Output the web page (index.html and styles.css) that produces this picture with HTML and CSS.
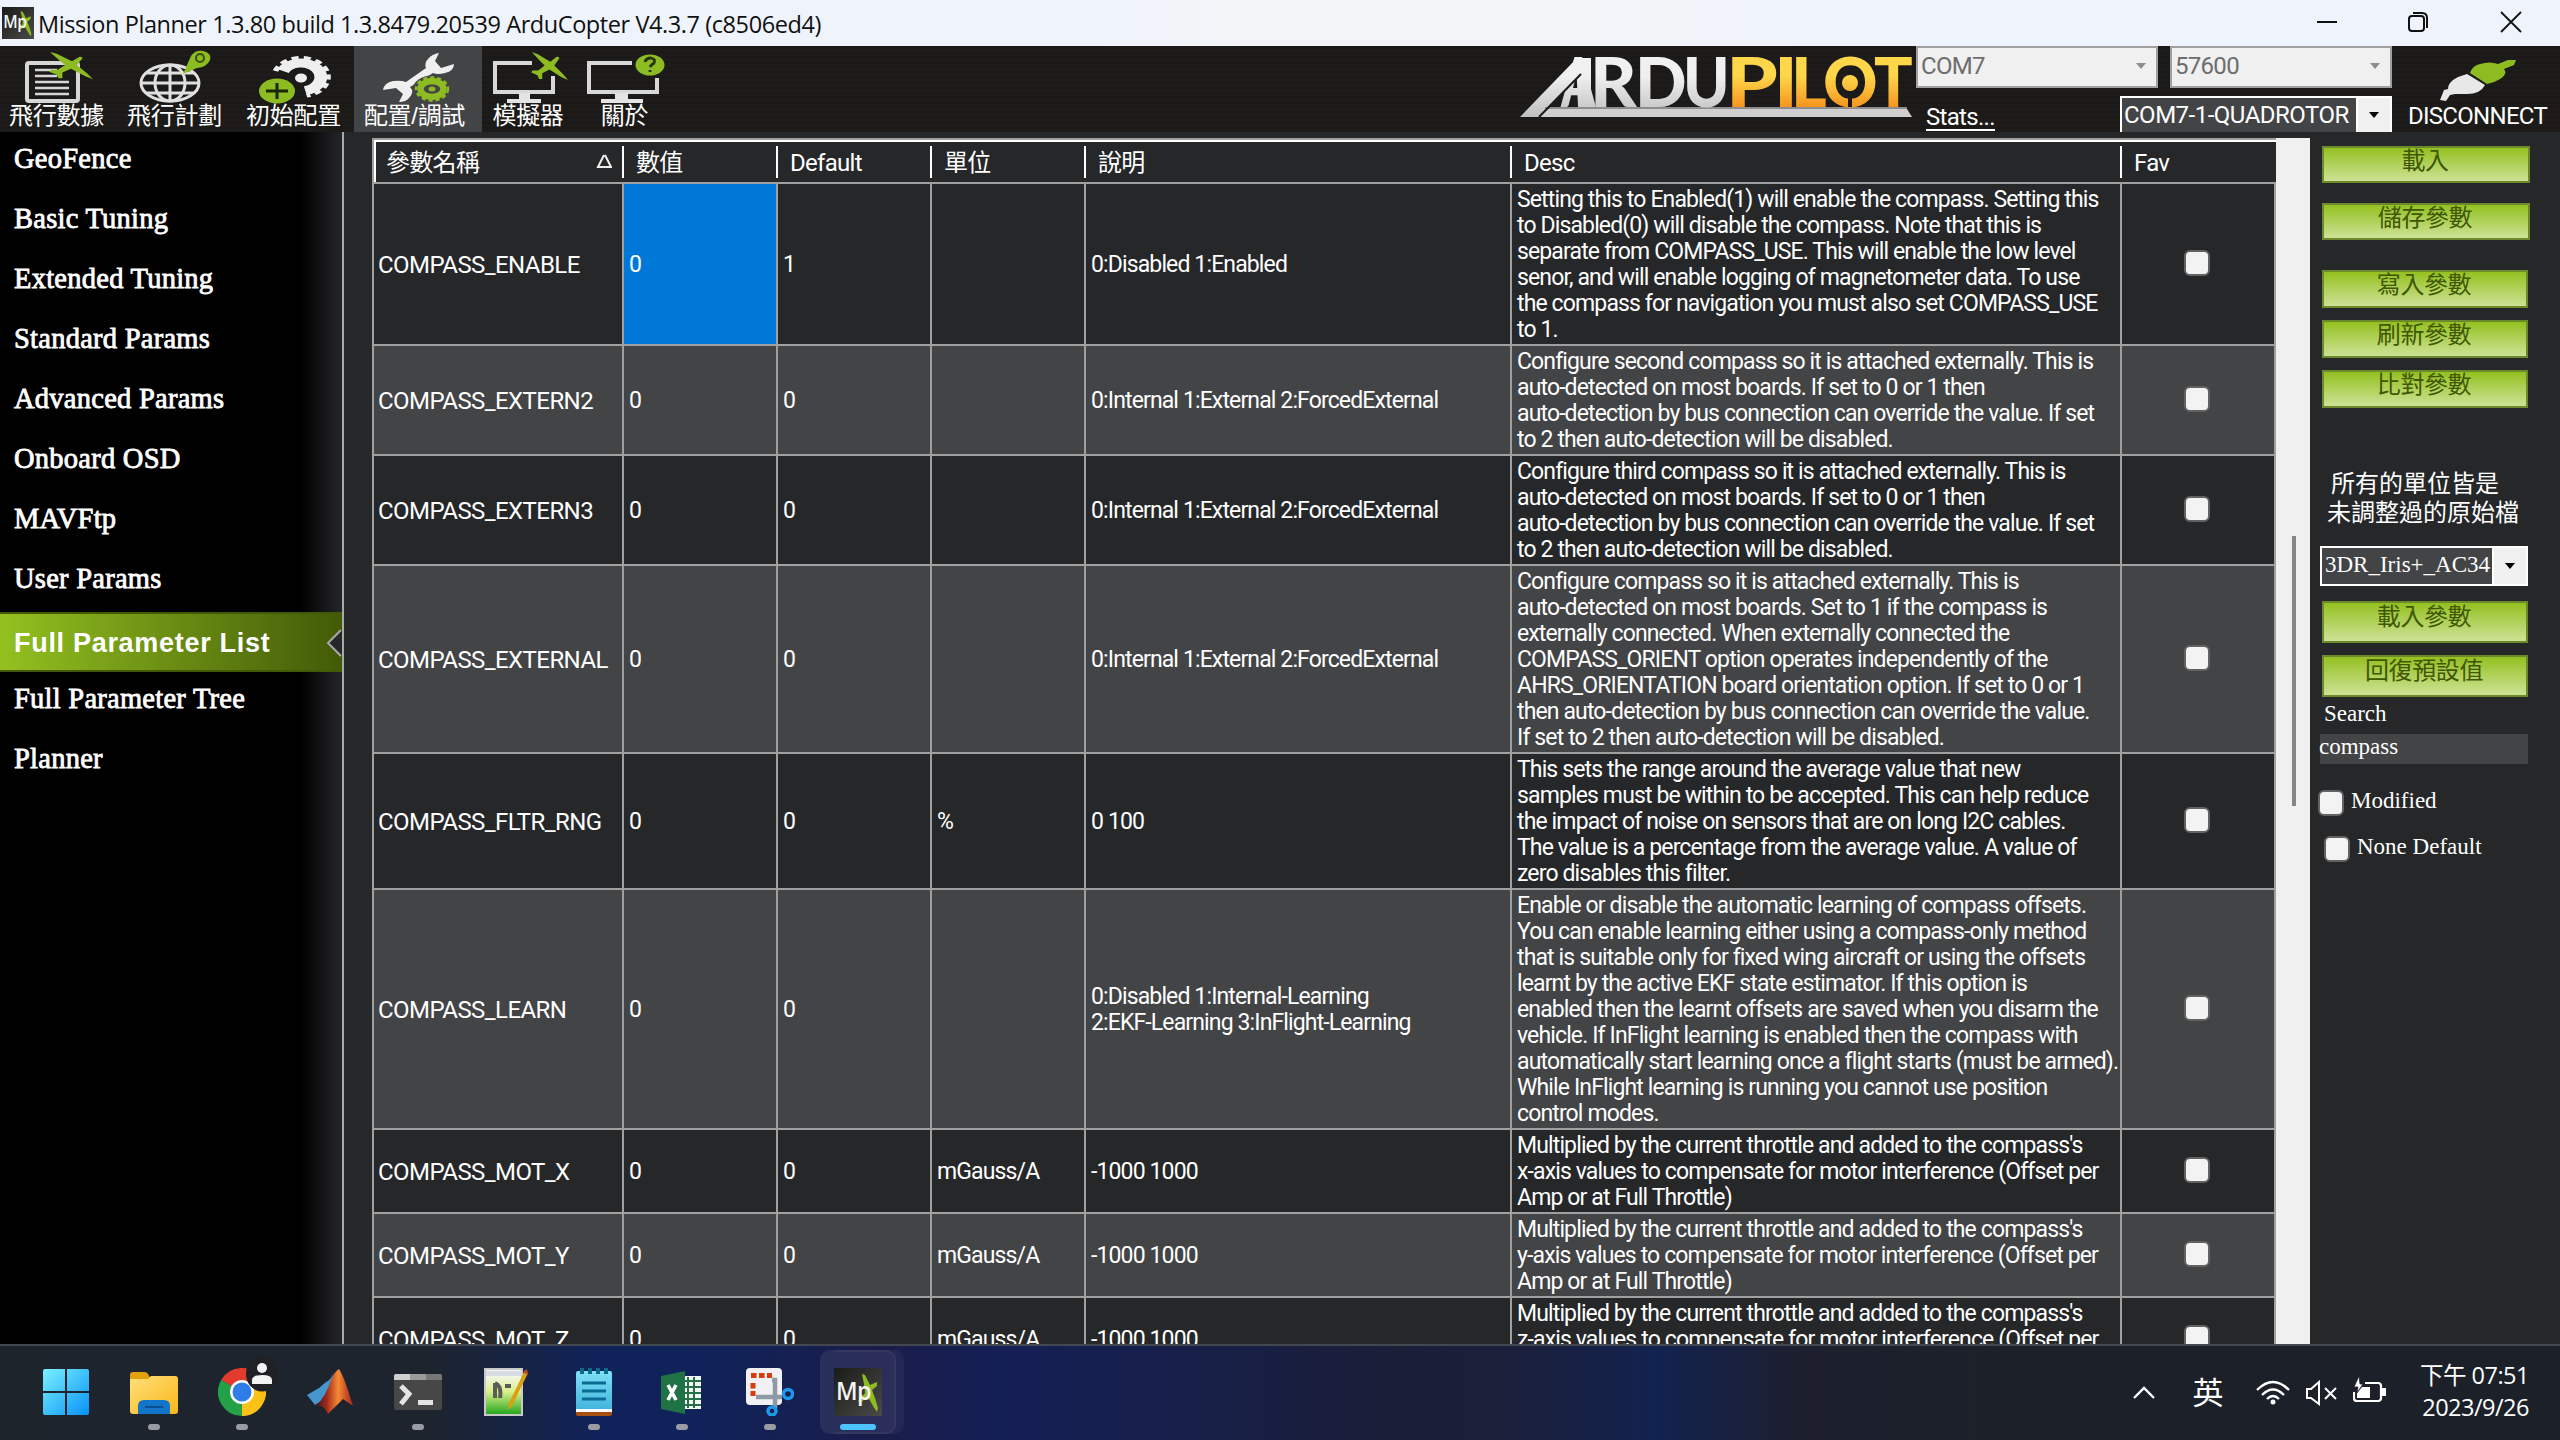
FILE: index.html
```html
<!DOCTYPE html>
<html lang="zh-Hant">
<head>
<meta charset="utf-8">
<title>Mission Planner</title>
<link rel="stylesheet" href="styles.css">
</head>
<body>
<svg class="defs" width="0" height="0" aria-hidden="true">
  <defs>
    <symbol id="plane" viewBox="0 0 46 32" preserveAspectRatio="none">
      <path d="M1 1 L8 3 L24 11 L32 6 Q37 6 34 9 L29 15 L40 24 L46 30 L38 27 L23 19 L14 23 L14 29 L10 29 L8 25 L0 22 L2 20 L9 20 L17 15 L11 10 Z"/>
    </symbol>
    <linearGradient id="gold" gradientUnits="userSpaceOnUse" x1="0" y1="12" x2="0" y2="62"><stop offset=".35" stop-color="#fdd749"/><stop offset="1" stop-color="#f7931e"/></linearGradient>
    <linearGradient id="steel" gradientUnits="userSpaceOnUse" x1="0" y1="12" x2="0" y2="72"><stop offset=".3" stop-color="#f0f0f0"/><stop offset="1" stop-color="#bebebe"/></linearGradient>
    <linearGradient id="winblue" gradientUnits="userSpaceOnUse" x1="0" y1="0" x2="46" y2="46"><stop offset="0" stop-color="#7df3ff"/><stop offset="1" stop-color="#0a94f8"/></linearGradient>
    <linearGradient id="folder" x1="0" y1="0" x2="1" y2="1"><stop offset="0" stop-color="#ffe07a"/><stop offset="1" stop-color="#fbb61b"/></linearGradient>
    <linearGradient id="flame" x1="0" y1="0" x2="1" y2="0"><stop offset="0" stop-color="#3a1a28"/><stop offset=".3" stop-color="#a52b1a"/><stop offset=".6" stop-color="#f58a35"/><stop offset="1" stop-color="#a5201a"/></linearGradient>
    <linearGradient id="npp" x1="0" y1="0" x2="0" y2="1"><stop offset=".1" stop-color="#f6f8f4"/><stop offset=".5" stop-color="#d9ef8a"/><stop offset="1" stop-color="#1ea51c"/></linearGradient>
    <linearGradient id="pad" x1="0" y1="0" x2="0" y2="1"><stop offset="0" stop-color="#7fe0f7"/><stop offset="1" stop-color="#43b6dc"/></linearGradient>
    <linearGradient id="mpbg" x1="0" y1="0" x2="1" y2="1"><stop offset="0" stop-color="#1b1b1a"/><stop offset="1" stop-color="#4a4b49"/></linearGradient>
    <symbol id="mp" viewBox="0 0 48 48">
      <rect width="48" height="48" fill="url(#mpbg)"/>
      <path fill="#8dbb22" d="M28 6 L31 7 L36 17 L43 14 L43 18 L38 22 L41 30 L44 40 L43 44 L39 38 L34 29 L27 34 L24 33 L31 25 L30 16 Z"/>
      <text x="2" y="32" font-family="Open Sans" font-size="26" font-weight="600" fill="#f4f4f4" textLength="35" lengthAdjust="spacingAndGlyphs">Mp</text>
    </symbol>
  </defs>
</svg>

<header class="titlebar">
  <svg class="app-icon" viewBox="0 0 48 48" preserveAspectRatio="none"><use href="#mp"/></svg>
  <span class="title">Mission Planner 1.3.80 build 1.3.8479.20539 ArduCopter V4.3.7 (c8506ed4)</span>
  <svg class="win-controls" width="210" height="24" viewBox="0 0 210 24" fill="none" stroke="#111" stroke-width="2">
    <path d="M0 12H20"/>
    <rect x="92" y="6" width="15" height="15" rx="3"/><path d="M96 3H105Q110 3 110 8V18"/>
    <path d="M184 2L204 22M204 2L184 22" stroke-width="1.8"/>
  </svg>
</header>

<nav class="toolbar">
  <div class="tool w-data"><svg width="70" height="54" viewBox="0 0 70 54"><g fill="none" stroke="#d6d6d6" stroke-width="4"><rect x="4" y="13" width="51" height="38" rx="2"/><path stroke-width="2.6" d="M12 20H34M12 26H34M12 32H46M12 38H46M12 44H46"/></g><use href="#plane" x="26" y="1" width="44" height="30" fill="#8dbb22"/></svg><span>飛行數據</span></div>
  <div class="tool w-plan"><svg width="74" height="54" viewBox="0 0 74 54"><g fill="none" stroke="#e0e0e0" stroke-width="3"><ellipse cx="31" cy="33" rx="29" ry="18"/><ellipse cx="31" cy="33" rx="15" ry="18"/><path d="M31 15V51M2 33H60M7 23H55M7 43H55"/></g><path d="M44 24L52 6Q56 0 64 1Q73 3 71 10Q68 17 58 18Z" fill="#8dbb22"/><circle cx="61" cy="8" r="4" fill="none" stroke="#3b5010" stroke-width="2"/></svg><span>飛行計劃</span></div>
  <div class="tool w-init"><svg width="74" height="54" viewBox="0 0 74 54"><g transform="translate(43 27) scale(1.42 1)" fill="none" stroke="#efefef"><path d="M-12.700 -6A14 14 0 1 1 3 13.700" stroke-width="9"/><path d="M-18 -6A19 19 0 1 1 4 18.600" stroke-width="4" stroke-dasharray="5 3.500"/></g><ellipse cx="43" cy="28" rx="6" ry="4.500" fill="#efefef"/><ellipse cx="19" cy="41" rx="19.500" ry="14" fill="#1b1a18"/><ellipse cx="19" cy="41" rx="18" ry="12.500" fill="#8dbb22"/><path d="M8 41H30M19 33V49" stroke="#1c2608" stroke-width="3"/></svg><span>初始配置</span></div>
  <div class="tool w-conf active"><svg width="74" height="54" viewBox="0 0 74 54"><g fill="#efefef"><path d="M47 9Q51 4 58 3L54 11L60 18L73 14Q73 21 64 23Q57 25 52 23L29 37Q34 42 28 48Q25 52 18 52L22 44L15 38L2 40Q3 33 12 31Q20 30 25 32L45 18Q43 13 47 9Z"/></g><ellipse cx="51" cy="39" rx="19" ry="13.500" fill="#434446"/><ellipse cx="51" cy="39" rx="11.500" ry="8" fill="none" stroke="#8dbb22" stroke-width="6.500"/><ellipse cx="51" cy="39" rx="16" ry="11.500" fill="none" stroke="#8dbb22" stroke-width="2.500" stroke-dasharray="4 3"/><ellipse cx="51" cy="39" rx="3.500" ry="2.500" fill="#8dbb22"/></svg><span>配置/調試</span></div>
  <div class="tool w-sim"><svg width="76" height="54" viewBox="0 0 76 54"><path d="M40 13H3V42H61V26" fill="none" stroke="#d8d8d8" stroke-width="4"/><path d="M27 43H38V49H49V53H15V49H27Z" fill="#e4e4e4"/><use href="#plane" x="39" y="1" width="37" height="31" fill="#8dbb22"/></svg><span>模擬器</span></div>
  <div class="tool w-help"><svg width="80" height="54" viewBox="0 0 80 54"><path d="M46 13H3V42H71V28" fill="none" stroke="#d8d8d8" stroke-width="4"/><path d="M29 43H42V49H57V53H15V49H29Z" fill="#e4e4e4"/><ellipse cx="64" cy="15" rx="14.500" ry="10.500" fill="#8dbb22"/><path d="M59 12Q60 8 65 8Q70 9 68 13Q65 15 64 17M64 20V22" fill="none" stroke="#263308" stroke-width="2.800"/></svg><span>關於</span></div>

  <svg class="logo" width="394" height="76" viewBox="0 0 394 76" font-family="Lato" font-weight="900" font-size="69">
    <g fill="url(#steel)">
      <path d="M1 71L58 12H64L62 28L20 71Z"/>
      <path d="M25 63H388L393 71H21Z" fill="#cfcfcf"/><path d="M26 62H388" stroke="#8d8d8d" stroke-width="2"/>
      <text x="42" y="61" textLength="34" lengthAdjust="spacingAndGlyphs">A</text>
      <path d="M57 12H72V61H59Z"/>
      <text x="71" y="61" textLength="46" lengthAdjust="spacingAndGlyphs">R</text>
      <text x="116" y="61" textLength="51" lengthAdjust="spacingAndGlyphs">D</text>
      <text x="164" y="61" textLength="46" lengthAdjust="spacingAndGlyphs">U</text>
    </g>
    <path d="M20 71L62 28" stroke="#1b1a19" stroke-width="2"/>
    <g fill="url(#gold)">
      <text x="207" y="61" textLength="51" lengthAdjust="spacingAndGlyphs">P</text>
      <text x="255" y="61" textLength="23" lengthAdjust="spacingAndGlyphs">I</text>
      <text x="272" y="61" textLength="35" lengthAdjust="spacingAndGlyphs">L</text>
      <text x="304" y="61" textLength="54" lengthAdjust="spacingAndGlyphs">O</text>
      <circle cx="331" cy="37" r="8"/>
      <text x="355" y="61" textLength="38" lengthAdjust="spacingAndGlyphs">T</text>
    </g>
    <path d="M331 46V61" stroke="#1b1a19" stroke-width="4"/>
  </svg>

  <div class="conn">
    <div class="conn-row">
      <div class="combo off port"><span>COM7</span><i></i></div>
      <div class="combo off baud"><span>57600</span><i></i></div>
    </div>
    <div class="conn-row second">
      <a class="stats">Stats...</a>
      <div class="combo vehicle"><span>COM7-1-QUADROTOR</span><b><i></i></b></div>
    </div>
  </div>
  <div class="disconnect"><svg width="80" height="44" viewBox="0 0 80 44"><path d="M2 42L6 32L10 31Q10 24 20 19L29 16L47 27Q42 37 26 36L17 36L12 37L8 43Z" fill="#e8e8e8"/><path d="M32 15Q34 8 42 6Q52 3 60 6L70 2L78 2L76 7L66 11Q70 16 62 21Q56 25 49 26Z" fill="#8dbb22"/></svg><span>DISCONNECT</span></div>
</nav>

<main class="main">
  <aside class="sidebar">
    <a>GeoFence</a><a>Basic Tuning</a><a>Extended Tuning</a><a>Standard Params</a><a>Advanced Params</a><a>Onboard OSD</a><a>MAVFtp</a><a>User Params</a>
    <a class="active">Full Parameter List<svg width="16" height="28" viewBox="0 0 16 28"><path d="M16 0L2 14L16 28Z" fill="#262729"/><path d="M15 1L2 14L15 27" fill="none" stroke="#a9a9a9" stroke-width="2"/></svg></a>
    <a>Full Parameter Tree</a><a>Planner</a>
  </aside>

  <section class="grid">
    <div class="row head">
      <div>參數名稱<svg width="16" height="15" viewBox="0 0 16 15"><path d="M8 1L2 13H15L9 1" fill="none" stroke="#eee" stroke-width="2"/></svg></div><div>數值</div><div>Default</div><div>單位</div><div>說明</div><div>Desc</div><div>Fav</div>
    </div>
    <div class="row"><div class="caps">COMPASS_ENABLE</div><div class="sel">0</div><div>1</div><div></div><div>0:Disabled 1:Enabled</div><div>Setting this to Enabled(1) will enable the compass. Setting this<br>to Disabled(0) will disable the compass. Note that this is<br>separate from COMPASS_USE. This will enable the low level<br>senor, and will enable logging of magnetometer data. To use<br>the compass for navigation you must also set COMPASS_USE<br>to 1.</div><div><i class="check"></i></div></div>
    <div class="row alt"><div class="caps">COMPASS_EXTERN2</div><div>0</div><div>0</div><div></div><div>0:Internal 1:External 2:ForcedExternal</div><div>Configure second compass so it is attached externally. This is<br>auto-detected on most boards. If set to 0 or 1 then<br>auto-detection by bus connection can override the value. If set<br>to 2 then auto-detection will be disabled.</div><div><i class="check"></i></div></div>
    <div class="row"><div class="caps">COMPASS_EXTERN3</div><div>0</div><div>0</div><div></div><div>0:Internal 1:External 2:ForcedExternal</div><div>Configure third compass so it is attached externally. This is<br>auto-detected on most boards. If set to 0 or 1 then<br>auto-detection by bus connection can override the value. If set<br>to 2 then auto-detection will be disabled.</div><div><i class="check"></i></div></div>
    <div class="row alt"><div class="caps">COMPASS_EXTERNAL</div><div>0</div><div>0</div><div></div><div>0:Internal 1:External 2:ForcedExternal</div><div>Configure compass so it is attached externally. This is<br>auto-detected on most boards. Set to 1 if the compass is<br>externally connected. When externally connected the<br>COMPASS_ORIENT option operates independently of the<br>AHRS_ORIENTATION board orientation option. If set to 0 or 1<br>then auto-detection by bus connection can override the value.<br>If set to 2 then auto-detection will be disabled.</div><div><i class="check"></i></div></div>
    <div class="row"><div class="caps">COMPASS_FLTR_RNG</div><div>0</div><div>0</div><div>%</div><div>0 100</div><div>This sets the range around the average value that new<br>samples must be within to be accepted. This can help reduce<br>the impact of noise on sensors that are on long I2C cables.<br>The value is a percentage from the average value. A value of<br>zero disables this filter.</div><div><i class="check"></i></div></div>
    <div class="row alt"><div class="caps">COMPASS_LEARN</div><div>0</div><div>0</div><div></div><div>0:Disabled 1:Internal-Learning<br>2:EKF-Learning 3:InFlight-Learning</div><div>Enable or disable the automatic learning of compass offsets.<br>You can enable learning either using a compass-only method<br>that is suitable only for fixed wing aircraft or using the offsets<br>learnt by the active EKF state estimator. If this option is<br>enabled then the learnt offsets are saved when you disarm the<br>vehicle. If InFlight learning is enabled then the compass with<br>automatically start learning once a flight starts (must be armed).<br>While InFlight learning is running you cannot use position<br>control modes.</div><div><i class="check"></i></div></div>
    <div class="row"><div class="caps">COMPASS_MOT_X</div><div>0</div><div>0</div><div>mGauss/A</div><div>-1000 1000</div><div>Multiplied by the current throttle and added to the compass's<br>x-axis values to compensate for motor interference (Offset per<br>Amp or at Full Throttle)</div><div><i class="check"></i></div></div>
    <div class="row alt"><div class="caps">COMPASS_MOT_Y</div><div>0</div><div>0</div><div>mGauss/A</div><div>-1000 1000</div><div>Multiplied by the current throttle and added to the compass's<br>y-axis values to compensate for motor interference (Offset per<br>Amp or at Full Throttle)</div><div><i class="check"></i></div></div>
    <div class="row"><div class="caps">COMPASS_MOT_Z</div><div>0</div><div>0</div><div>mGauss/A</div><div>-1000 1000</div><div>Multiplied by the current throttle and added to the compass's<br>z-axis values to compensate for motor interference (Offset per<br>Amp or at Full Throttle)</div><div><i class="check"></i></div></div>
  </section>
  <div class="scroll"><i></i></div>

  <aside class="panel">
    <button>載入</button>
    <button class="save">儲存參數</button>
    <button class="narrow write">寫入參數</button>
    <button class="narrow near">刷新參數</button>
    <button class="narrow near">比對參數</button>
    <p class="note"><span>所有的單位皆是</span><span>未調整過的原始檔</span></p>
    <div class="combo frame"><span>3DR_Iris+_AC34</span><b><i></i></b></div>
    <button class="narrow tall load">載入參數</button>
    <button class="narrow tall reset">回復預設值</button>
    <label class="search">Search</label>
    <div class="field">compass</div>
    <label class="opt mod"><i class="check"></i>Modified</label>
    <label class="opt none"><i class="check"></i>None Default</label>
  </aside>
</main>

<footer class="taskbar">
  <div class="apps">
    <div class="app"><svg viewBox="0 0 48 48"><path fill="url(#winblue)" d="M3 1H23V23H1V3Q1 1 3 1ZM25 1H45Q47 1 47 3V23H25ZM1 25H23V47H3Q1 47 1 45ZM25 25H47V45Q47 47 45 47H25Z"/></svg></div>
    <div class="app on"><svg viewBox="0 0 48 48"><path fill="#e0a10c" d="M0 7Q0 4 3 4H15Q18 4 20 10V16H0Z"/><path fill="url(#folder)" d="M0 11H18L21 8H45Q48 8 48 11V43Q48 46 45 46H3Q0 46 0 43Z"/><path fill="#1275c9" d="M8 46V38Q8 32 14 32H34Q40 32 40 38V46Z"/><path d="M15 39H33" stroke="#0b4f93" stroke-width="2"/></svg></div>
    <div class="app on"><svg viewBox="0 0 48 48"><path fill="#e33b2e" d="M24 24L3.200 12A24 24 0 0 1 44.800 12Z"/><path fill="#fbc116" d="M24 24L44.800 12A24 24 0 0 1 24 48Z"/><path fill="#24a148" d="M24 24L24 48A24 24 0 0 1 3.200 12Z"/><path fill="#fbc116" d="M34 30L24 48Q36 47 42 39Z"/><circle cx="24" cy="24" r="12" fill="#fff"/><circle cx="24" cy="24" r="9.500" fill="#2f7de9"/></svg><svg class="badge" viewBox="0 0 32 36"><ellipse cx="16" cy="18" rx="16" ry="17.500" fill="#202124"/><circle cx="16" cy="12" r="5" fill="#f3f3f3"/><path fill="#f3f3f3" d="M6 28V24Q6 19 16 19Q26 19 26 24V28Z"/></svg></div>
    <div class="app"><svg viewBox="0 0 48 48"><path fill="#4596cf" d="M1 27L13 20L20 14Q25 12 28 4L21 29L9 37Z"/><path fill="url(#flame)" d="M33 1Q38 8 47 38L37 31Q30 38 22 46Q18 36 10 38Q20 28 25 12Q29 3 33 1Z"/></svg></div>
    <div class="app on"><svg viewBox="0 0 48 48"><rect y="6" width="48" height="36" rx="2" fill="#474747"/><path d="M0 12V8Q0 6 2 6H16V12Z" fill="#cfcfcf"/><path d="M16 6H32V12H16Z" fill="#9a9a9a"/><path d="M32 6H46Q48 6 48 8V12H32Z" fill="#777"/><path d="M7 18L15 26L7 36" fill="none" stroke="#e4e4e4" stroke-width="5"/><rect x="24" y="32" width="15" height="5" fill="#e4e4e4"/></svg></div>
    <div class="app"><svg viewBox="0 0 48 48"><rect x="3" y="1" width="37" height="46" fill="url(#npp)" stroke="#c9c9c9" stroke-width="2"/><path d="M4 3H40V8H4Z" fill="#d7dbe2"/><path d="M13 15V30M13 15Q20 18 18 30M23 18H29" fill="none" stroke="#5a5d58" stroke-width="4"/><path d="M43 2L46 5L30 38L26 42L27 35Z" fill="#dba012"/><path d="M41 4L46 7L45 1Z" fill="#b64a24"/></svg></div>
    <div class="app on"><svg viewBox="0 0 48 48"><path d="M6 40H42V46Q42 48 40 48H8Q6 48 6 46Z" fill="#a8500f"/><path d="M6 38H42V44H6Z" fill="#fff"/><path d="M6 5Q6 3 8 3H40Q42 3 42 5V41H6Z" fill="url(#pad)"/><path d="M12 0V6M20 0V6M28 0V6M36 0V6" stroke="#0a6a8c" stroke-width="4"/><path d="M12 15H36M12 23H36M12 31H36" stroke="#0b6b94" stroke-width="3"/></svg></div>
    <div class="app on"><svg viewBox="0 0 48 48"><rect x="25" y="8" width="18" height="33" fill="#f4f8f5"/><path d="M30 9V40M36 9V40M26 13H43M26 19H43M26 25H43M26 31H43M26 37H43" stroke="#257147" stroke-width="2"/><path d="M3 8L27 3V46L3 41Z" fill="#1e7244"/><path d="M10 17L18 32M18 17L10 32" stroke="#fff" stroke-width="3.500"/></svg></div>
    <div class="app on"><svg viewBox="0 0 48 48"><rect width="36" height="37" rx="4" fill="#f1f1f5"/><path d="M5 7.500H26M7 15V28" fill="none" stroke="#d93d0d" stroke-width="5" stroke-dasharray="5.500 2.500"/><path d="M10 29H36M26 12H29V40" fill="none" stroke="#8e9aa6" stroke-width="4.500"/><circle cx="42" cy="26" r="4.500" fill="none" stroke="#1c9ae8" stroke-width="3.500"/><circle cx="26" cy="43" r="4" fill="none" stroke="#1c9ae8" stroke-width="3.500"/></svg></div>
    <div class="app current"><svg viewBox="0 0 48 48"><use href="#mp"/></svg></div>
  </div>
  <div class="tray">
    <svg class="chev" width="24" height="14" viewBox="0 0 24 14"><path d="M2 12L12 2L22 12" fill="none" stroke="#fff" stroke-width="2.400"/></svg>
    <span class="ime">英</span>
    <svg class="wifi" width="34" height="26" viewBox="0 0 34 26" fill="none" stroke="#fff" stroke-width="2.300"><path d="M1 10Q17 -6 33 10M6 15Q17 4 28 15M11 19Q17 13 23 19"/><circle cx="17" cy="22" r="2.500" fill="#fff" stroke="none"/></svg>
    <svg class="vol" width="32" height="26" viewBox="0 0 32 26" fill="none" stroke="#fff" stroke-width="2"><path d="M2 9H6L14 2V24L6 18H2ZM20 8L31 19M31 8L20 19"/></svg>
    <svg class="bat" width="34" height="28" viewBox="0 0 34 28"><path d="M12 7H25Q28 7 28 10V22Q28 25 25 25H4Q1 25 1 22V16M31 13V19" fill="none" stroke="#fff" stroke-width="2.200"/><path d="M29 12H33V20H29Z" fill="#fff"/><path d="M9 11H17V22H4V17Z" fill="#fff"/><path d="M6 0L1 11H5L4 17L10 8H7Z" fill="#fff" stroke="#1c2129" stroke-width=".8"/></svg>
    <div class="clock"><span>下午 07:51</span><span>2023/9/26</span></div>
  </div>
</footer>
</body>
</html>
```
FILE: styles.css
```css
* { box-sizing: border-box; }
body {
  margin: 0;
  width: 2560px;
  height: 1440px;
  overflow: hidden;
  display: flex;
  flex-direction: column;
  background: #262729;
  color: #fff;
  font: 24px/26px Roboto, "Noto Sans CJK TC", sans-serif;
  letter-spacing: -0.7px;
}
.defs { position: absolute; }
svg { display: block; flex: none; }
i { display: block; font-style: normal; }

/* title bar */
.titlebar {
  flex: none;
  height: 46px;
  display: flex;
  align-items: center;
  padding: 0 39px 0 2px;
  background: linear-gradient(90deg, #eff3fb 1100px, #f3f5f8 1250px, #f3f5f8 1560px, #eff3fb 1800px);
  color: #101010;
}
.app-icon { width: 32px; height: 32px; }
.title {
  padding: 2px 0 0 4px;
  font: 23.5px/46px "Open Sans", sans-serif;
  letter-spacing: -0.42px;
  white-space: nowrap;
}
.win-controls { margin: -2px -6px 0 auto; }

/* top toolbar */
.toolbar {
  flex: none;
  height: 86px;
  display: flex;
  background: repeating-linear-gradient(180deg, #1b1a18 0 3px, #1e1c1a 3px 5px);
}
.tool {
  display: flex;
  flex-direction: column;
  align-items: center;
  padding-top: 4px;
  font: 24px/24px "Liberation Sans", "Noto Sans CJK TC", sans-serif;
  letter-spacing: -0.3px;
  white-space: nowrap;
}
.tool span { margin-left: -3px; }
.w-data { width: 116px; }
.w-plan { width: 120px; }
.w-init { width: 118px; }
.w-conf { width: 128px; }
.w-conf span { padding-right: 4px; }
.w-sim { width: 95px; }
.w-help { width: 98px; }
.tool.active { background: #434446; }
.logo { margin-left: 844px; }

.conn { width: 476px; margin-left: 3px; display: flex; flex-direction: column; justify-content: space-between; }
.conn-row { display: flex; justify-content: space-between; }
.combo {
  display: flex;
  align-items: center;
  border: 2px solid #fff;
  background: #434446;
  white-space: nowrap;
}
.combo i { border: 5px solid transparent; border-top: 6px solid #000; border-bottom: 0; }
.combo b { width: 34px; align-self: stretch; display: flex; align-items: center; justify-content: center; background: #f0f0f0; border-left: 2px solid #fff; }
.combo.off { height: 42px; background: #f0f0f0; border-color: #a0a0a0; color: #6d6d6d; justify-content: space-between; padding: 0 10px 2px 3px; }
.combo.off i { border-top-color: #8d8d8d; }
.port { width: 242px; }
.baud { width: 222px; }
.second { align-items: flex-end; }
.stats { margin: 0 0 1px 10px; line-height: 24px; border-bottom: 2px solid #fff; letter-spacing: -0.7px; }
.vehicle { width: 272px; height: 36px; border-bottom: 0; justify-content: space-between; padding-left: 2px; letter-spacing: -0.5px; }
.disconnect {
  flex: 1;
  display: flex;
  flex-direction: column;
  align-items: center;
  gap: 1px;
  padding: 12px 0 0 3px;
}

/* body */
.main { flex: none; height: 1212px; display: flex; overflow: hidden; }
.sidebar {
  width: 344px;
  flex: none;
  border-right: 2px solid #a9a9a9;
  background: linear-gradient(90deg, #000 300px, #262729 344px);
  font: 28.5px/60px "Liberation Serif", serif;
  letter-spacing: 0.25px;
}
.sidebar a { display: block; height: 60px; padding: 1px 0 0 14px; -webkit-text-stroke: 0.8px #fff; }
.sidebar a:first-child { margin-top: -4px; }
.sidebar .active {
  width: 342px;
  margin: 4px 0 -4px;
  display: flex;
  align-items: center;
  justify-content: space-between;
  background: linear-gradient(90deg, #94c120, #425a07);
  border: solid #425a07;
  border-width: 2px 0;
  font: bold 27px/56px "Liberation Sans", sans-serif;
  letter-spacing: 0.7px;
  -webkit-text-stroke: 0;
}

.grid {
  width: 1904px;
  flex: none;
  margin: 6px 0 0 28px;
  border-left: 2px solid #a0a0a0;
  overflow: hidden;
}
.row {
  display: grid;
  grid-template-columns: 250px 154px 154px 154px 426px 610px 154px;
  border-bottom: 2px solid #a0a0a0;
}
.row > div {
  display: flex;
  align-items: center;
  padding: 3px 0 1px 5px;
  border-right: 2px solid #a0a0a0;
  font-size: 23px;
  letter-spacing: -0.87px;
  white-space: nowrap;
}
.row.alt { background: #434446; }
.row > .caps { padding-left: 4px; font-size: 24px; letter-spacing: -0.57px; }
.row > .sel { background: #0078d7; }
.row > div:last-child { justify-content: center; padding: 0 2px 0 0; }
.row > div:last-child .check { margin-top: -2px; }
.row.head { height: 46px; border-top: 2px solid #a0a0a0; box-shadow: inset 2px 2px #fff; }
.row.head > div {
  margin: 6px 0 4px;
  padding: 2px 0 0 12px;
  border-color: #fff;
  justify-content: flex-start;
  font-size: 24px;
  letter-spacing: -0.7px;
}
.row.head > div:first-child { justify-content: space-between; padding-right: 10px; }
.row.head > div:last-child { border: 0; }
.row.head svg { margin-top: -4px; }
.check { width: 26px; height: 26px; flex: none; background: #f3f3f3; border: 2px solid #626262; border-radius: 6px; }

.scroll { width: 34px; flex: none; margin-top: 6px; background: #f0f0f0; padding: 398px 0 0 16px; }
.scroll i { width: 4px; height: 270px; background: #858585; }

/* right panel */
.panel {
  width: 250px;
  padding: 14px 0 0 12px;
  font: 23px/26px "Liberation Serif", "Noto Sans CJK TC", serif;
  letter-spacing: 0;
}
.panel button {
  display: flex;
  justify-content: center;
  align-items: flex-start;
  width: 208px;
  height: 37px;
  padding: 0 2px 0 0;
  border: 2px solid #6c8a2b;
  background: linear-gradient(#94c120, #cde296);
  color: #405704;
  font: 24px/21px "Noto Sans CJK TC", sans-serif;
  letter-spacing: -0.4px;
}
.panel button.narrow { width: 206px; height: 38px; }
.panel button.tall { height: 42px; line-height: 24px; }
.panel button.save { margin-top: 20px; }
.panel button.write { margin-top: 30px; }
.panel button.near { margin-top: 12px; }
.panel button.load { margin-top: 15px; }
.panel button.reset { margin-top: 12px; }
.note { margin: 62px 0 0 -6px; font-size: 24px; line-height: 29px; }
.note span { display: block; padding-left: 11px; }
.note span:first-child { padding-left: 15px; }
.frame { width: 208px; height: 40px; margin: 18px 0 0 -2px; padding-left: 3px; justify-content: space-between; }
.frame span { margin-top: -3px; }
.search { display: block; margin: 4px 0 0 2px; height: 33px; }
.field { width: 208px; height: 30px; margin-left: -2px; padding-top: 1px; background: #434446; line-height: 24px; text-indent: -1px; }
.opt { display: flex; align-items: center; gap: 7px; height: 26px; line-height: 20px; padding-bottom: 3px; }
.opt .check { position: relative; top: 2px; }
.mod { margin: 25px 0 0 -4px; }
.none { margin: 20px 0 0 2px; }

/* taskbar */
.taskbar {
  flex: none;
  height: 96px;
  border-top: 2px solid #43474f;
  display: flex;
  justify-content: space-between;
  background: linear-gradient(90deg, #1e242c 0, #1d242e 430px, #10225a 600px, #10225a 700px, #1a1d4a 880px, #141f55 1000px, #171f48 1200px, #1b1e37 1400px, #1b1f3a 1500px, #12224f 1660px, #1d1f2e 1800px, #1c2129 2000px, #1c2129 2560px);
}
.apps { display: flex; padding: 6px 0 0 26px; }
.app { position: relative; width: 80px; margin-right: 8px; height: 80px; display: flex; justify-content: center; align-items: center; }
.app > svg:first-child { width: 48px; height: 48px; }
.app .badge { position: absolute; left: 44px; top: 4px; width: 32px; height: 36px; }
.app.on::after, .app.current::after {
  content: "";
  position: absolute;
  left: 34px;
  bottom: 2px;
  width: 12px;
  height: 6px;
  border-radius: 3px;
  background: #9a9ca3;
}
.app.current { width: 72px; margin: 0 0 0 4px; border-radius: 8px; background: #ffffff14; box-shadow: 0 0 0 2px #ffffff14, 8px 0 0 2px #ffffff0c; }
.app.current::after { left: 18px; width: 36px; background: #4cc2ff; }
.tray { display: flex; align-items: center; padding-right: 31px; font: 23.5px/32px "Open Sans", "Noto Sans CJK TC", sans-serif; letter-spacing: -0.5px; }
.ime { font-size: 31px; margin: -2px 33px 0 36px; }
.wifi { margin-right: 15px; }
.vol { margin-right: 16px; }
.bat { margin-right: 33px; margin-top: -6px; }
.clock { display: flex; flex-direction: column; align-items: flex-end; margin-top: -4px; }
```
